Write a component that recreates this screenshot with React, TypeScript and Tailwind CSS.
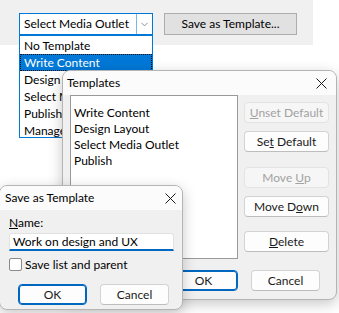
import { ChevronDown } from 'lucide-react';

const font = 'font-["Lato","Liberation_Sans",sans-serif]';

function CloseIcon() {
  return (
    <svg width="11" height="11" viewBox="0 0 11 11" className="shrink-0">
      <path d="M0.5 0.5L10.5 10.5M10.5 0.5L0.5 10.5" stroke="#1a1a1a" strokeWidth="1" />
    </svg>
  );
}

function Btn({
  children,
  disabled,
  focused,
  className = '',
}: {
  children: React.ReactNode;
  disabled?: boolean;
  focused?: boolean;
  className?: string;
}) {
  const look = disabled
    ? 'border-[#e3e3e3] bg-[#f6f6f6] text-[#a2a2a2]'
    : focused
      ? 'border-[#0067c0] bg-[#fdfdfd] text-[#1a1a1a] shadow-[inset_0_0_0_1px_#0067c0]'
      : 'border-[#d3d3d3] border-b-[#bdbdbd] bg-[#fdfdfd] text-[#1a1a1a]';
  return (
    <div className={`flex h-[21px] items-center justify-center whitespace-nowrap rounded-[4px] border text-[12px] ${look} ${className}`}>
      <span>{children}</span>
    </div>
  );
}

export default function App() {
  const options = ['No Template', 'Write Content', 'Design Layout', 'Select Media Outlet', 'Publish', 'Manage Templates...'];
  const templates = ['Write Content', 'Design Layout', 'Select Media Outlet', 'Publish'];

  return (
    <div className={`relative h-[313px] w-[339px] overflow-hidden bg-white text-[12px] text-black ${font}`}>
      {/* Toolbar strip */}
      <div className="flex h-[45px] w-[313px] items-start gap-[11px] bg-[#f0f0f0] pl-[19px] pt-[13px]">
        <div className="flex h-[22px] w-[134px] border border-[#0078d7] bg-white">
          <span className="flex flex-1 items-center pl-[4px] leading-none">Select Media Outlet</span>
          <span className="flex w-[16px] items-center justify-center border-l border-[#7eb4ea]">
            <ChevronDown size={11} strokeWidth={1.5} color="#606060" />
          </span>
        </div>
        <div className="flex h-[22px] w-[133px] items-center justify-center border border-[#adadad] bg-[#e1e1e1]">
          Save as Template...
        </div>
      </div>

      {/* Open dropdown */}
      <div className="absolute left-[19px] top-[35px] flex h-[103px] w-[134px] flex-col border border-[#0078d7] bg-white pt-[1px]">
        {options.map((o, i) => (
          <div
            key={o}
            className={
              i === 1
                ? 'flex h-[17px] items-center border border-dotted border-[#111] bg-[#0078d7] pl-[3px] text-white'
                : 'flex h-[17px] items-center whitespace-nowrap pl-[4px]'
            }
          >
            {o}
          </div>
        ))}
      </div>

      {/* Templates dialog */}
      <div className="absolute left-[62px] top-[70px] flex h-[230px] w-[275px] flex-col overflow-hidden rounded-[8px] border border-[#b4b4b4] bg-[#f0f0f0] shadow-[0_4px_14px_rgba(0,0,0,0.22)]">
        <div className="flex h-[24px] items-center justify-between bg-[#fbfbfb] pl-[4px] pr-[9px]">
          <span>Templates</span>
          <CloseIcon />
        </div>
        <div className="flex gap-[6px] pl-[7px]">
          <div className="flex h-[164px] w-[168px] flex-col border border-[#9a9a9a] bg-white pl-[3px] pt-[9px]">
            {templates.map((t) => (
              <div key={t} className="flex h-[16px] items-center">
                {t}
              </div>
            ))}
          </div>
          <div className="flex w-[85px] flex-col pt-[7px]">
            <Btn disabled>
              <u>U</u>nset Default
            </Btn>
            <Btn className="mt-[8px]">
              Se<u>t</u> Default
            </Btn>
            <Btn disabled className="mt-[15px]">
              Move <u>U</u>p
            </Btn>
            <Btn className="mt-[8px]">
              Move D<u>o</u>wn
            </Btn>
            <Btn className="mt-[14px]">
              <u>D</u>elete
            </Btn>
          </div>
        </div>
        <div className="mt-[11px] flex justify-end gap-[13px] pr-[16px]">
          <Btn focused className="w-[69px]">
            OK
          </Btn>
          <Btn className="w-[69px]">Cancel</Btn>
        </div>
      </div>

      {/* Save as Template dialog */}
      <div className="absolute -left-px top-[185px] flex h-[125px] w-[184px] flex-col overflow-hidden rounded-[8px] border border-[#b4b4b4] bg-[#f0f0f0] shadow-[0_4px_14px_rgba(0,0,0,0.22)]">
        <div className="flex h-[24px] items-center justify-between bg-[#fbfbfb] pl-[5px] pr-[6px]">
          <span>Save as Template</span>
          <CloseIcon />
        </div>
        <div className="flex flex-col pl-[9px] pr-[8px] pt-[6px]">
          <span className="leading-[14px]">
            <u>N</u>ame:
          </span>
          <div className="mt-[3px] flex h-[18px] items-center rounded-t-[3px] border border-b-2 border-[#e2e2e2] border-b-[#0067c0] bg-white pl-[3px]">
            Work on design and UX
          </div>
          <div className="mt-[7px] flex items-center gap-[3px]">
            <span className="h-[13px] w-[13px] rounded-[2px] border border-[#8a8a8a] bg-white" />
            <span className="leading-[13px]">Save list and parent</span>
          </div>
          <div className="mt-[13px] flex gap-[13px] pl-[9px]">
            <Btn focused className="w-[69px]">
              OK
            </Btn>
            <Btn className="w-[69px]">Cancel</Btn>
          </div>
        </div>
      </div>
    </div>
  );
}
